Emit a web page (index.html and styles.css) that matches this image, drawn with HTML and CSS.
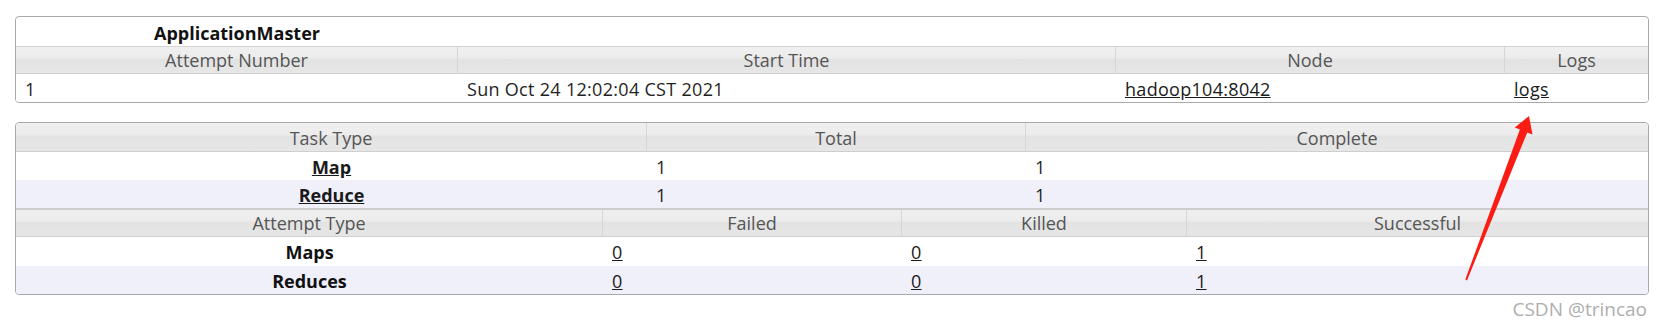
FILE: index.html
```html
<!DOCTYPE html>
<html>
<head>
<meta charset="utf-8">
<title>Job</title>
<link rel="stylesheet" href="styles.css">
</head>
<body>
<div class="page">
  <div class="box">
    <table class="grid">
      <colgroup><col class="c1a"><col class="c1b"><col class="c1c"><col class="c1d"></colgroup>
      <tr class="am-row"><td class="am-title">ApplicationMaster</td><td></td><td></td><td></td></tr>
      <tr class="head"><th>Attempt Number</th><th>Start Time</th><th>Node</th><th class="last">Logs</th></tr>
      <tr class="row odd"><td>1</td><td>Sun Oct 24 12:02:04 CST 2021</td><td><a href="#">hadoop104:8042</a></td><td><a href="#">logs</a></td></tr>
    </table>
  </div>

  <div class="box second">
    <table class="grid">
      <colgroup><col class="c2a"><col class="c2b"><col class="c2c"></colgroup>
      <tr class="head first-head"><th>Task Type</th><th>Total</th><th class="last">Complete</th></tr>
      <tr class="row odd"><td class="name"><a href="#">Map</a></td><td>1</td><td>1</td></tr>
      <tr class="row even"><td class="name"><a href="#">Reduce</a></td><td>1</td><td>1</td></tr>
    </table>
    <table class="grid">
      <colgroup><col class="c3a"><col class="c3b"><col class="c3c"><col class="c3d"></colgroup>
      <tr class="head sub-head"><th>Attempt Type</th><th>Failed</th><th>Killed</th><th class="last">Successful</th></tr>
      <tr class="row odd tall"><td class="name plain">Maps</td><td><a href="#">0</a></td><td><a href="#">0</a></td><td><a href="#">1</a></td></tr>
      <tr class="row even"><td class="name plain">Reduces</td><td><a href="#">0</a></td><td><a href="#">0</a></td><td><a href="#">1</a></td></tr>
    </table>
  </div>
</div>

<svg class="arrow" width="1664" height="327" viewBox="0 0 1664 327">
  <polygon points="1529,116 1532.5,134.5 1527.3,132.4 1467,280.4 1465.3,279.6 1519.9,129.6 1514.7,127.6" fill="#fb1c13"/>
</svg>

<div class="watermark">CSDN @trincao</div>
</body>
</html>
```

FILE: styles.css
```css
html, body {
  margin: 0;
  padding: 0;
  background: #ffffff;
}

body {
  width: 1664px;
  height: 327px;
  position: relative;
  overflow: hidden;
  font-family: "Open Sans", "Noto Sans", sans-serif;
  font-size: 18px;
  color: #222222;
}

.page {
  padding: 16px 15px 0 15px;
  display: flex;
  flex-direction: column;
  gap: 19px;
}

.box {
  border: 1px solid #a9a9a9;
  border-radius: 4px;
  overflow: hidden;
  background: #ffffff;
}

.grid {
  width: 100%;
  border-collapse: separate;
  border-spacing: 0;
  table-layout: fixed;
}

.c1a { width: 442px; }
.c1b { width: 658px; }
.c1c { width: 389px; }
.c1d { width: 143px; }

.c2a { width: 631px; }
.c2b { width: 379px; }
.c2c { width: 622px; }

.c3a { width: 587px; }
.c3b { width: 299px; }
.c3c { width: 285px; }
.c3d { width: 461px; }

.grid td, .grid th {
  padding: 0;
  white-space: nowrap;
  line-height: 24px;
  box-sizing: border-box;
}

.am-row td {
  height: 29px;
  padding-top: 2px;
}

.am-title {
  text-align: center;
  font-weight: bold;
  color: #111111;
}

.head th {
  height: 28px;
  font-weight: normal;
  color: #555555;
  text-align: center;
  background: linear-gradient(to bottom, #f0f0f0 0%, #ececec 42%, #e3e3e3 48%, #e6e6e6 100%);
  border-top: 1px solid #d3d3d3;
  border-bottom: 1px solid #cfcfcf;
  border-right: 1px solid #d6d6d6;
}

.head th.last {
  border-right: none;
}

.first-head th {
  height: 29px;
  border-top: none;
  padding-top: 1px;
}

.sub-head th {
  height: 29px;
  border-top: 2px solid #cdcdcd;
}

.row td {
  height: 28px;
  padding-left: 9px;
  padding-top: 1px;
  color: #1f1f1f;
  letter-spacing: 0.3px;
}

.row.tall td {
  height: 29px;
}

.row.odd td {
  background: #ffffff;
}

.row.even td {
  background: #f0f0fb;
}

.row td.name {
  padding-left: 0;
  text-align: center;
  font-weight: bold;
  color: #111111;
  letter-spacing: 0;
}

a {
  color: #1a1a1a;
  text-decoration: underline;
}

.arrow {
  position: absolute;
  left: 0;
  top: 0;
  pointer-events: none;
}

.watermark {
  position: absolute;
  right: 17px;
  top: 296px;
  font-family: "Open Sans", "Noto Sans", sans-serif;
  font-size: 19px;
  color: #aeaeae;
  line-height: 26px;
}
```
